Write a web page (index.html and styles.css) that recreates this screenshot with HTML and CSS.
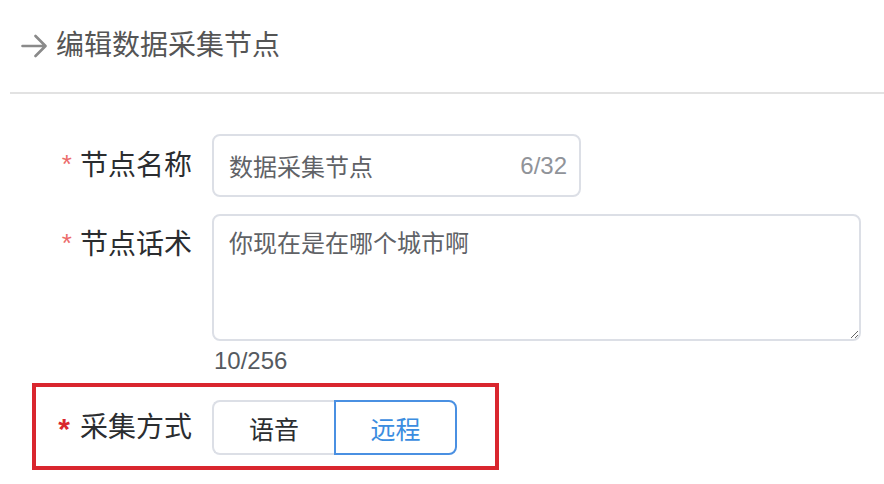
FILE: index.html
```html
<!DOCTYPE html>
<html lang="zh-CN">
<head>
<meta charset="utf-8">
<title>编辑数据采集节点</title>
<link rel="stylesheet" href="styles.css">
</head>
<body>
<div class="header">
  <svg class="back" width="26" height="24" viewBox="0 0 26 24" aria-hidden="true">
    <path d="M1.5 12 H24 M14.5 2 L24.5 12 L14.5 22" fill="none" stroke="#8a8a8a" stroke-width="2.6" stroke-linecap="round" stroke-linejoin="round"/>
  </svg>
  <span class="title">编辑数据采集节点</span>
</div>
<form class="form">
  <div class="row">
    <label class="label"><span class="star">*</span>节点名称</label>
    <div class="input">
      <input class="input-inner" type="text" value="数据采集节点">
      <span class="count">6/32</span>
    </div>
  </div>
  <div class="row row-top">
    <label class="label label-tall"><span class="star">*</span>节点话术</label>
    <textarea class="textarea">你现在是在哪个城市啊</textarea>
  </div>
  <div class="counter">10/256</div>
  <div class="highlight">
    <div class="row">
      <label class="label label-inner"><span class="star star-strong">*</span>采集方式</label>
      <div class="segment">
        <button type="button" class="seg-btn">语音</button>
        <button type="button" class="seg-btn seg-active">远程</button>
      </div>
    </div>
  </div>
</form>
</body>
</html>
```

FILE: styles.css
```css
* { box-sizing: border-box; }
html, body {
  margin: 0;
  padding: 0;
  background: #ffffff;
  font-family: "Liberation Sans", "Noto Sans CJK SC", sans-serif;
}
.header {
  margin-left: 10px;
  height: 94px;
  padding: 0 0 0 11px;
  border-bottom: 2px solid #e2e2e2;
  display: flex;
  align-items: center;
  gap: 9px;
}
.back { display: block; flex: none; }
.title {
  font-size: 28px;
  line-height: 40px;
  color: #555555;
}
.form {
  padding-top: 40px;
}
.row {
  display: flex;
  align-items: center;
}
.row-top {
  align-items: flex-start;
  margin-top: 17px;
}
.label {
  width: 212px;
  flex: none;
  padding-right: 20px;
  text-align: right;
  font-size: 28px;
  line-height: 40px;
  color: #2b2d30;
}
.label-tall { line-height: 62px; }
.label-inner { width: 176px; }
.star {
  font-family: "Liberation Sans", sans-serif;
  font-size: 26px;
  color: #ec6b6b;
  margin-right: 8px;
  position: relative;
  top: -2px;
}
.star-strong {
  font-size: 30px;
  color: #d9262e;
  font-weight: bold;
  top: 2px;
  margin-right: 10px;
}
.input {
  width: 369px;
  height: 63px;
  border: 2px solid #dcdfe6;
  border-radius: 8px;
  display: flex;
  align-items: center;
  padding: 0 12px 0 15px;
  background: #fff;
}
.input-inner {
  flex: 1;
  min-width: 0;
  border: 0;
  outline: none;
  padding: 0;
  font-family: "Liberation Sans", "Noto Sans CJK SC", sans-serif;
  font-size: 24px;
  color: #606266;
  background: transparent;
}
.count {
  font-size: 24px;
  color: #909399;
}
.textarea {
  width: 649px;
  height: 127px;
  border: 2px solid #dcdfe6;
  border-radius: 8px;
  padding: 10px 15px;
  font-family: "Liberation Sans", "Noto Sans CJK SC", sans-serif;
  font-size: 24px;
  line-height: 36px;
  color: #606266;
  resize: both;
  outline: none;
  display: block;
}
.counter {
  margin-left: 214px;
  font-size: 24px;
  line-height: 40px;
  color: #555a60;
}
.highlight {
  margin: 2px 0 0 32px;
  width: 467px;
  border: 4px solid #d9262e;
  padding: 13px 0 11px 0;
}
.segment {
  display: flex;
  height: 55px;
}
.seg-btn {
  width: 122px;
  height: 55px;
  margin: 0;
  padding: 0;
  background: #fff;
  border: 2px solid #dcdfe6;
  font-family: "Liberation Sans", "Noto Sans CJK SC", sans-serif;
  font-size: 25px;
  color: #2b2d30;
  cursor: pointer;
}
.seg-btn:first-child {
  border-right: 0;
  border-radius: 8px 0 0 8px;
}
.seg-active {
  width: 123px;
  border-color: #4a90e2;
  border-radius: 0 8px 8px 0;
  color: #3b8de0;
}
```
